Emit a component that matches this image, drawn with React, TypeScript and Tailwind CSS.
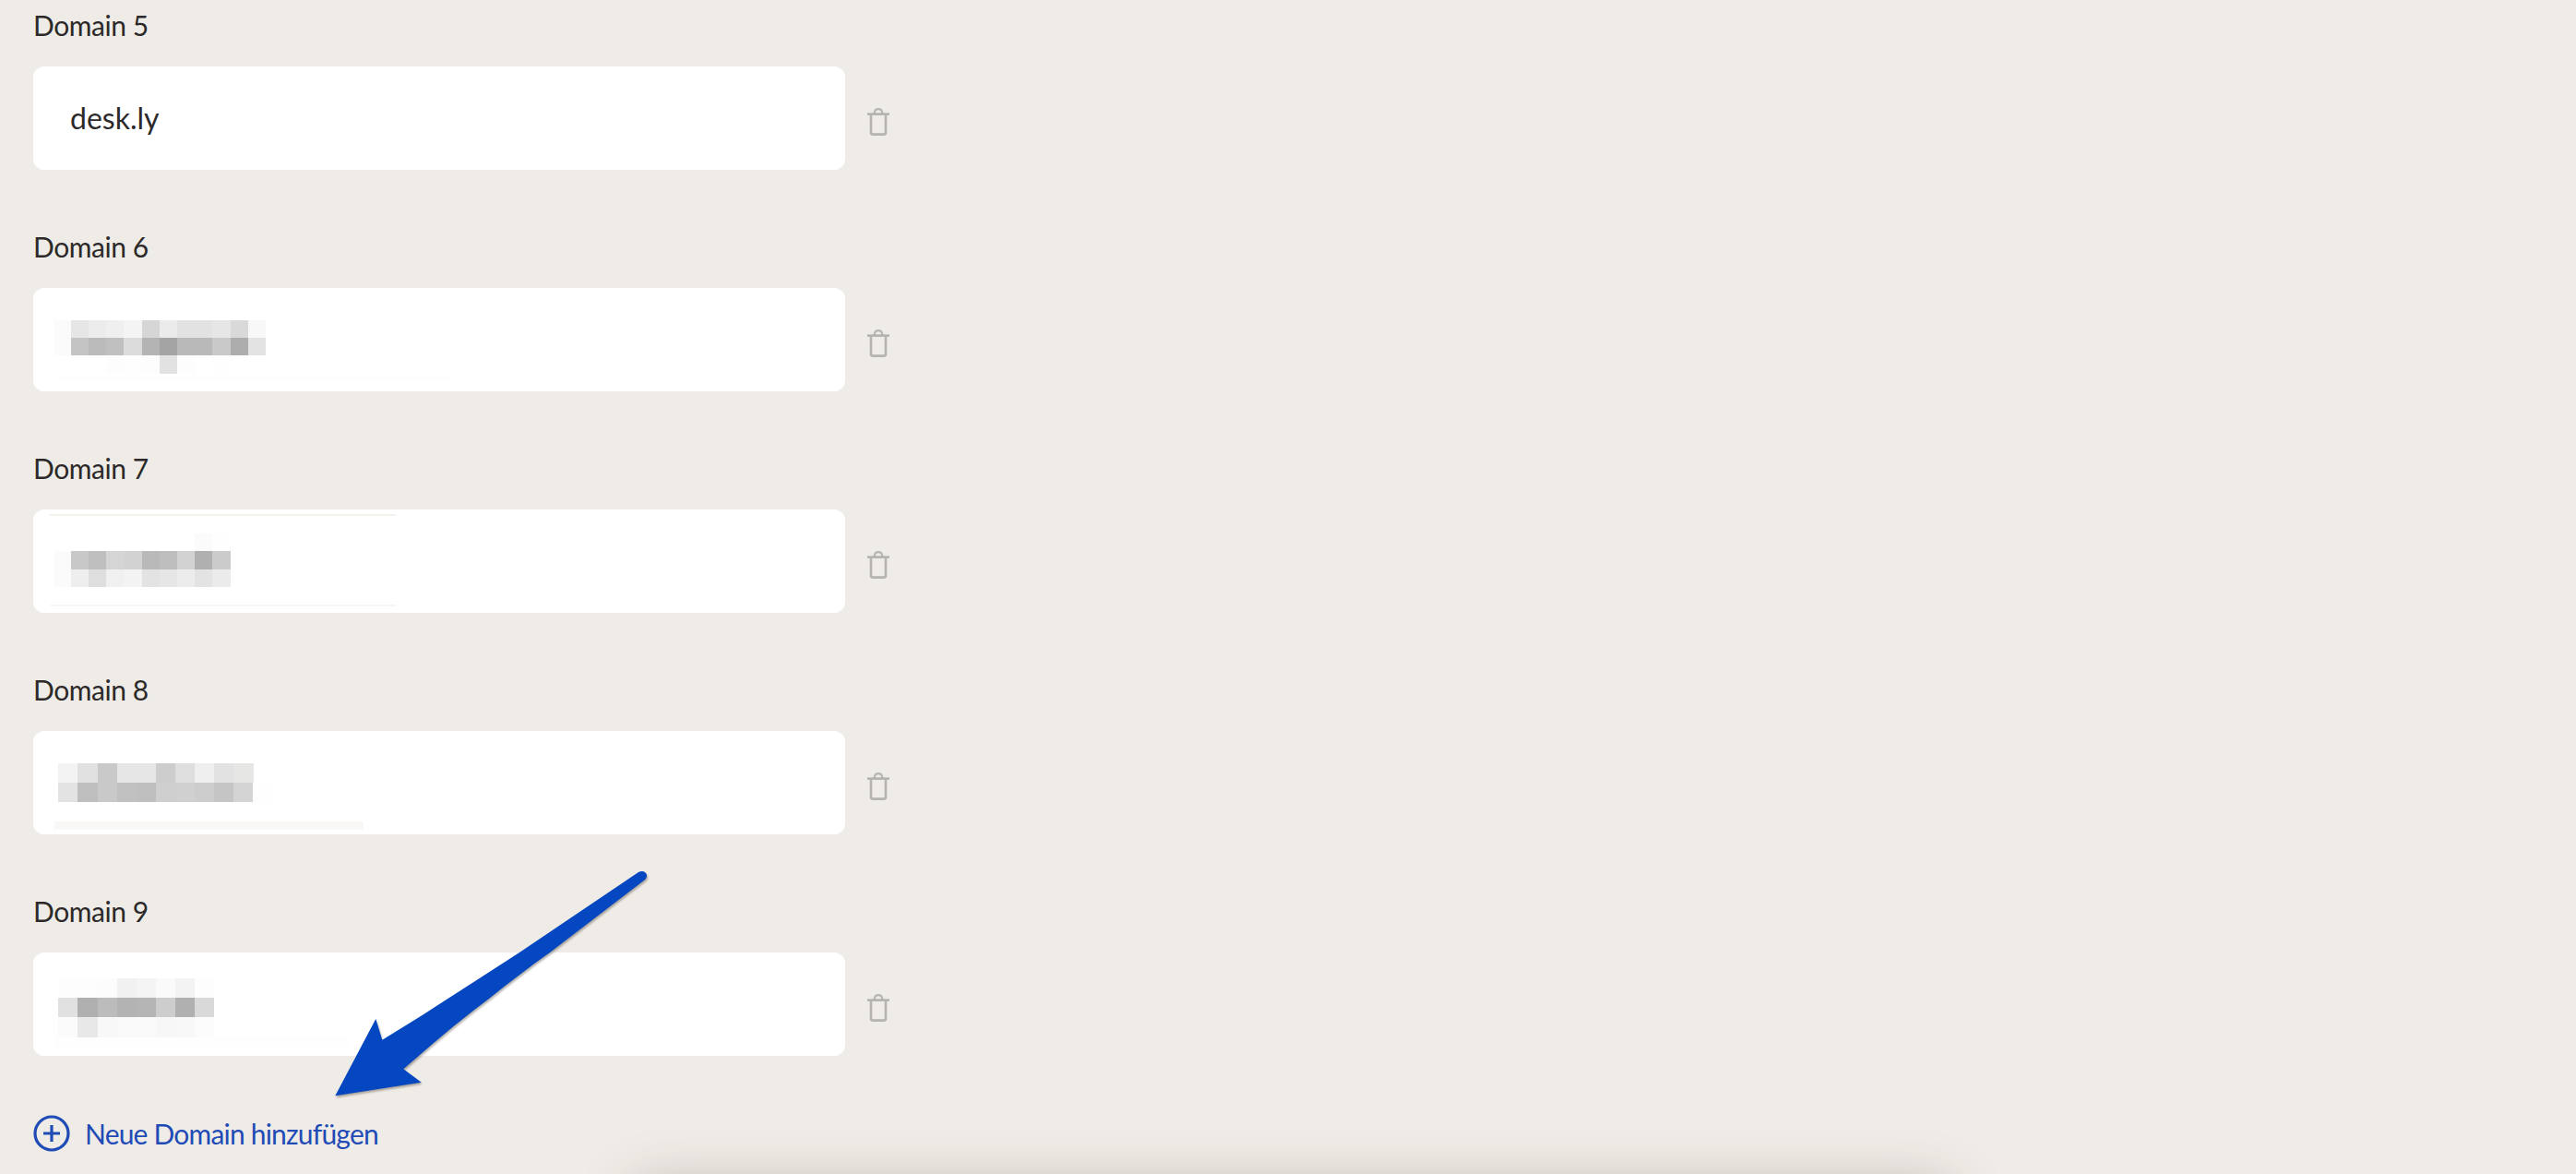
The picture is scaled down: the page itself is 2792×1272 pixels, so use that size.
const F = "font-['Lato','Liberation_Sans',sans-serif]";

type Mosaic = {
  x: number;
  w: number;
  clip: number;
  rows: { y: number; h: number; cells: string[] }[];
  bars: { x: number; y: number; w: number; h: number; c: string }[];
};

const m6: Mosaic = {
  x: 21.5,
  w: 19.2,
  clip: 23.3,
  rows: [
    { y: 34.7, h: 19.3, cells: ['#fbfbfb', '#e6e6e6', '#ececec', '#efefef', '#f4f4f4', '#d6d6d6', '#ebebeb', '#e2e2e2', '#e2e2e2', '#e6e6e6', '#d9d9d9', '#f8f8f8'] },
    { y: 54, h: 19.3, cells: ['#fbfbfb', '#c4c4c4', '#bababa', '#c0c0c0', '#dcdcdc', '#b4b4b4', '#a4a4a4', '#b9b9b9', '#b9b9b9', '#c9c9c9', '#adadad', '#e3e3e3'] },
    { y: 73.3, h: 19.3, cells: ['#ffffff', '#ffffff', '#ffffff', '#fdfdfd', '#fefefe', '#fdfdfd', '#e2e2e2', '#fdfdfd', '#ffffff', '#fefefe', '#ffffff', '#ffffff'] },
  ],
  bars: [
    { x: 24, y: 16, w: 425, h: 1, c: '#fefefd' },
    { x: 24, y: 96, w: 425, h: 3, c: '#fefdfd' },
  ],
};

const m7: Mosaic = {
  x: 21.5,
  w: 19.2,
  clip: 21.5,
  rows: [
    { y: 26, h: 19.3, cells: ['#ffffff', '#ffffff', '#ffffff', '#ffffff', '#ffffff', '#ffffff', '#ffffff', '#ffffff', '#fbfbfb', '#fefefe'] },
    { y: 45.3, h: 19.4, cells: ['#fbfbfb', '#c8c8c8', '#bfbfbf', '#d5d5d5', '#d2d2d2', '#b9b9b9', '#bebebe', '#d2d2d2', '#b0b0b0', '#cbcbcb'] },
    { y: 64.7, h: 19.3, cells: ['#fbfbfb', '#eeeeee', '#dedede', '#f0f0f0', '#f3f3f3', '#e3e3e3', '#e6e6e6', '#ececec', '#e3e3e3', '#ebebeb'] },
  ],
  bars: [
    { x: 18, y: 5, w: 375, h: 2, c: '#f6f2ed' },
    { x: 18, y: 103, w: 375, h: 2, c: '#f8f6f3' },
  ],
};

const m8: Mosaic = {
  x: 27.3,
  w: 21.1,
  clip: 27.3,
  rows: [
    { y: 35, h: 21, cells: ['#f3f3f3', '#e1e1e1', '#c9c9c9', '#e6e6e6', '#e6e6e6', '#cdcdcd', '#dedede', '#efefef', '#e2e2e2', '#e6e6e5'] },
    { y: 56, h: 21, cells: ['#e3e3e3', '#bfbfbf', '#c9c9c9', '#c1c1c1', '#bfbfbf', '#cfcfcf', '#d0d0d0', '#cdcdcd', '#c5c5c5', '#d4d4d4', '#fefefe'] },
  ],
  bars: [{ x: 23, y: 98, w: 335, h: 9, c: '#f9f8f6' }],
};

const m9: Mosaic = {
  x: 27.3,
  w: 21.1,
  clip: 27.3,
  rows: [
    { y: 28, h: 21, cells: ['#fdfdfd', '#fdfdfd', '#fcfcfc', '#f1f1f1', '#f4f4f4', '#fafafa', '#f3f3f3', '#fdfdfd'] },
    { y: 49, h: 21.3, cells: ['#e1e1e1', '#b0b0b0', '#bcbcbc', '#b3b3b3', '#b5b5b5', '#cdcdcd', '#b0b0b0', '#d9d9d9'] },
    { y: 70.3, h: 21, cells: ['#fbfbfb', '#e8e8e8', '#f8f8f8', '#fafafa', '#fafafa', '#f7f7f7', '#f8f8f8', '#fcfcfc'] },
  ],
  bars: [{ x: 23, y: 92, w: 320, h: 14, c: '#fefefe' }],
};

function Pixelated({ m }: { m: Mosaic }) {
  return (
    <svg width="880" height="112" viewBox="0 0 880 112" className="block" shapeRendering="crispEdges">
      {m.bars.map((b, i) => (
        <rect key={i} x={b.x} y={b.y} width={b.w} height={b.h} fill={b.c} />
      ))}
      {m.rows.map((r, ri) =>
        r.cells.map((c, ci) => {
          const x0 = Math.max(m.x + ci * m.w, m.clip);
          const x1 = m.x + (ci + 1) * m.w + 0.3;
          return <rect key={`${ri}-${ci}`} x={x0} y={r.y} width={x1 - x0} height={r.h + 0.3} fill={c} />;
        }),
      )}
    </svg>
  );
}

function Trash() {
  return (
    <svg width="24" height="30" viewBox="0 0 24 30" fill="none" stroke="#b5b3b0" strokeWidth="2.6" className="ml-6 mt-2 shrink-0">
      <path d="M0 6.6H24" />
      <path d="M8 6V4.4a3.9 3.1 0 0 1 8 0V6" strokeWidth="2.2" />
      <path d="M4 7V26.6a2 2 0 0 0 2 2H18a2 2 0 0 0 2-2V7" />
    </svg>
  );
}

function Row({ n, m, text, last }: { n: number; m?: Mosaic; text?: string; last?: boolean }) {
  return (
    <div className={last ? '' : 'mb-[65px]'}>
      <div className={`${F} h-9 mb-[27px] text-[30px] leading-9 tracking-[-0.45px] text-[#2b2929]`}>Domain {n}</div>
      <div className="flex items-center">
        <div className="h-[112px] w-[880px] overflow-hidden rounded-xl bg-white">
          {text ? (
            <div className={`${F} pl-10 text-[32px] leading-[112px] text-[#2b2929]`}>{text}</div>
          ) : (
            m && <Pixelated m={m} />
          )}
        </div>
        <Trash />
      </div>
    </div>
  );
}

export default function App() {
  return (
    <div className="relative h-[1272px] w-[2792px] overflow-hidden bg-[#efece7] pl-9 pt-[9px]">
      <Row n={5} text="desk.ly" />
      <Row n={6} m={m6} />
      <Row n={7} m={m7} />
      <Row n={8} m={m8} />
      <Row n={9} m={m9} last />
      <div className={`${F} mt-16 flex h-10 items-center gap-4 text-[30px] leading-10 tracking-[-0.8px] text-[#1f4bb6]`}>
        <svg width="40" height="40" viewBox="0 0 40 40" fill="none" stroke="#1f4bb6" strokeWidth="3.2" className="shrink-0">
          <circle cx="20" cy="20" r="18" />
          <path d="M20 11V29M11 20H29" />
        </svg>
        <span>Neue Domain hinzufügen</span>
      </div>

      <svg
        width="2792"
        height="1272"
        viewBox="0 0 2792 1272"
        className="pointer-events-none absolute left-0 top-0 drop-shadow-[1px_2px_1px_rgba(60,50,40,0.4)]"
      >
        <path
          fill="#0547c0"
          d="M414.3 1126.7 C 435 1114 455 1102 473 1090 L 563 1032 L 692 945 C 696 942.5 700.5 944.5 701 948 C 701.2 950 700.5 952 698.5 953.5 L 596 1032 C 575 1047 552 1064 530 1082 C 510 1097 490 1113 470 1130 L 437.3 1158.3 L 456.7 1172.7 L 363.3 1187.3 L 407.3 1104 Z"
        />
      </svg>

      <div className="absolute left-[690px] top-[1290px] h-20 w-[1420px] shadow-[0_0_60px_rgba(60,50,40,0.35)]" />
    </div>
  );
}
